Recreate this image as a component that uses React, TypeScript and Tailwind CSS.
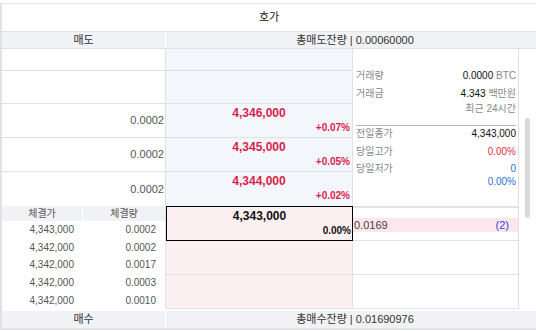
const asks = [
  { h: 'h-[22px]', qty: '', price: '', pct: '' },
  { h: 'h-[33px]', qty: '', price: '', pct: '' },
  { h: 'h-[34px]', qty: '0.0002', price: '4,346,000', pct: '+0.07%' },
  { h: 'h-[34px]', qty: '0.0002', price: '4,345,000', pct: '+0.05%' },
  { h: 'h-[34px]', qty: '0.0002', price: '4,344,000', pct: '+0.02%' },
]

const trades = [
  ['4,343,000', '0.0002'],
  ['4,342,000', '0.0002'],
  ['4,342,000', '0.0017'],
  ['4,342,000', '0.0003'],
  ['4,342,000', '0.0010'],
]

export default function App() {
  return (
    <div className="w-[536px] h-[331px] bg-white pt-[3px] font-['Liberation_Sans','Noto_Sans_CJK_KR',sans-serif] text-[#333]">
      <div className="flex flex-col border-t border-l-2 border-b-2 border-[#e2e2e2]">
        {/* Title */}
        <div className="h-[27px] flex items-center justify-center text-[11px] text-[#222]">호가</div>

        {/* Header */}
        <div className="h-[18px] flex bg-[#f1f2f6] border-t border-b border-[#e2e2e2] text-[11px] leading-[16px]">
          <div className="w-[164px] text-center border-r border-white">매도</div>
          <div className="flex-1 text-center pl-[8px]">총매도잔량 | 0.00060000</div>
        </div>

        {/* Body */}
        <div className="h-[260px] flex overflow-hidden">
          <div className="w-[517px] flex flex-col">
            {/* Ask side */}
            <div className="flex">
              <div className="w-[351px] flex flex-col">
                {asks.map((a, i) => (
                  <div key={i} className={`${a.h} flex ${i < asks.length - 1 ? 'border-b border-[#e2e2e2]' : ''}`}>
                    <div className="w-[164px] border-r border-[#e2e2e2] flex items-center justify-end pr-[1px] text-[11px] text-[#555]">
                      {a.qty}
                    </div>
                    <div className="w-[187px] bg-[#f3f7fc] border-r border-[#e2e2e2] flex flex-col pt-[2px]">
                      {a.price && (
                        <>
                          <div className="h-[14px] leading-[14px] text-center text-[12px] font-bold text-[#d81f4c]">{a.price}</div>
                          <div className="mt-[2px] h-[12px] leading-[12px] text-right pr-[2px] text-[10px] font-bold text-[#d81f4c]">{a.pct}</div>
                        </>
                      )}
                    </div>
                  </div>
                ))}
              </div>

              {/* Market info */}
              <div className="w-[166px] border-r border-[#e2e2e2] flex flex-col pl-[3px] pr-[2px] pt-[17px] text-[10px]">
                <div className="h-[18px] flex items-center justify-between">
                  <span className="text-[#888]">거래량</span>
                  <span><span className="text-[#111]">0.0000</span> <span className="text-[#888]">BTC</span></span>
                </div>
                <div className="h-[18px] flex items-center justify-between">
                  <span className="text-[#888]">거래금</span>
                  <span><span className="text-[#111]">4.343</span> <span className="text-[#888]">백만원</span></span>
                </div>
                <div className="h-[14px] leading-[14px] text-right text-[#888]">최근 24시간</div>
                <div className="h-[10px] border-b border-[#b5b5b5]"></div>
                <div className="h-[14px] flex items-center justify-between">
                  <span className="text-[#888]">전일종가</span>
                  <span className="text-[#111]">4,343,000</span>
                </div>
                <div className="mt-[4px] h-[14px] flex items-center justify-between">
                  <span className="text-[#888]">당일고가</span>
                  <span className="text-[#e8303c]">0.00%</span>
                </div>
                <div className="mt-[4px] h-[13px] flex items-center justify-between">
                  <span className="text-[#888]">당일저가</span>
                  <span className="text-[#2f6fd8]">0</span>
                </div>
                <div className="h-[14px] leading-[14px] text-right text-[#2f6fd8]">0.00%</div>
              </div>
            </div>

            {/* Bid side */}
            <div className="flex">
              {/* Recent trades */}
              <div className="w-[164px] h-[103px] border-r border-[#e2e2e2] flex flex-col overflow-hidden">
                <div className="h-[15px] flex bg-[#f1f2f6] text-[10px] leading-[15px] text-[#555]">
                  <div className="w-[81px] text-center border-r border-white">체결가</div>
                  <div className="flex-1 text-center">체결량</div>
                </div>
                {trades.map((t, i) => (
                  <div key={i} className="h-[18px] flex items-center text-[10px] text-[#555]">
                    <div className="w-[81px] text-right pr-[9px]">{t[0]}</div>
                    <div className="flex-1 text-right pr-[9px]">{t[1]}</div>
                  </div>
                ))}
              </div>

              {/* Bid prices */}
              <div className="w-[187px] flex flex-col">
                <div className="h-[35px] bg-[#fdf0f3] border border-black flex flex-col pt-[2px]">
                  <div className="h-[14px] leading-[14px] text-center text-[12px] font-bold text-[#111]">4,343,000</div>
                  <div className="mt-[2px] h-[12px] leading-[12px] text-right pr-[1px] text-[10px] font-bold text-[#111]">0.00%</div>
                </div>
                <div className="h-[34px] bg-[#fdf0f3] border-b border-r border-[#e2e2e2]"></div>
                <div className="h-[34px] bg-[#fdf0f3] border-b border-r border-[#e2e2e2]"></div>
              </div>

              {/* Bid info */}
              <div className="w-[166px] flex flex-col border-r border-[#e2e2e2]">
                <div className="h-[35px] border-t-2 border-b border-[#e2e2e2] pt-[10px]">
                  <div className="h-[14px] bg-[#fde6ec] flex items-center justify-between pl-[1px] pr-[9px] text-[11px]">
                    <span className="text-[#444]">0.0169</span>
                    <span className="text-[#3c3cd8]">(2)</span>
                  </div>
                </div>
                <div className="h-[34px] border-b border-[#e2e2e2]"></div>
                <div className="h-[34px] border-b border-[#e2e2e2]"></div>
              </div>
            </div>
          </div>

          {/* Scrollbar */}
          <div className="w-[17px] flex flex-col">
            <div className="mt-[69px] ml-[6px] w-[5px] h-[100px] rounded-full bg-[#dadada]"></div>
          </div>
        </div>

        {/* Footer */}
        <div className="mt-[2px] h-[17px] flex bg-[#f1f2f6] text-[11px] leading-[17px]">
          <div className="w-[164px] text-center border-r border-white">매수</div>
          <div className="flex-1 text-center pl-[8px]">총매수잔량 | 0.01690976</div>
        </div>
      </div>
    </div>
  )
}
